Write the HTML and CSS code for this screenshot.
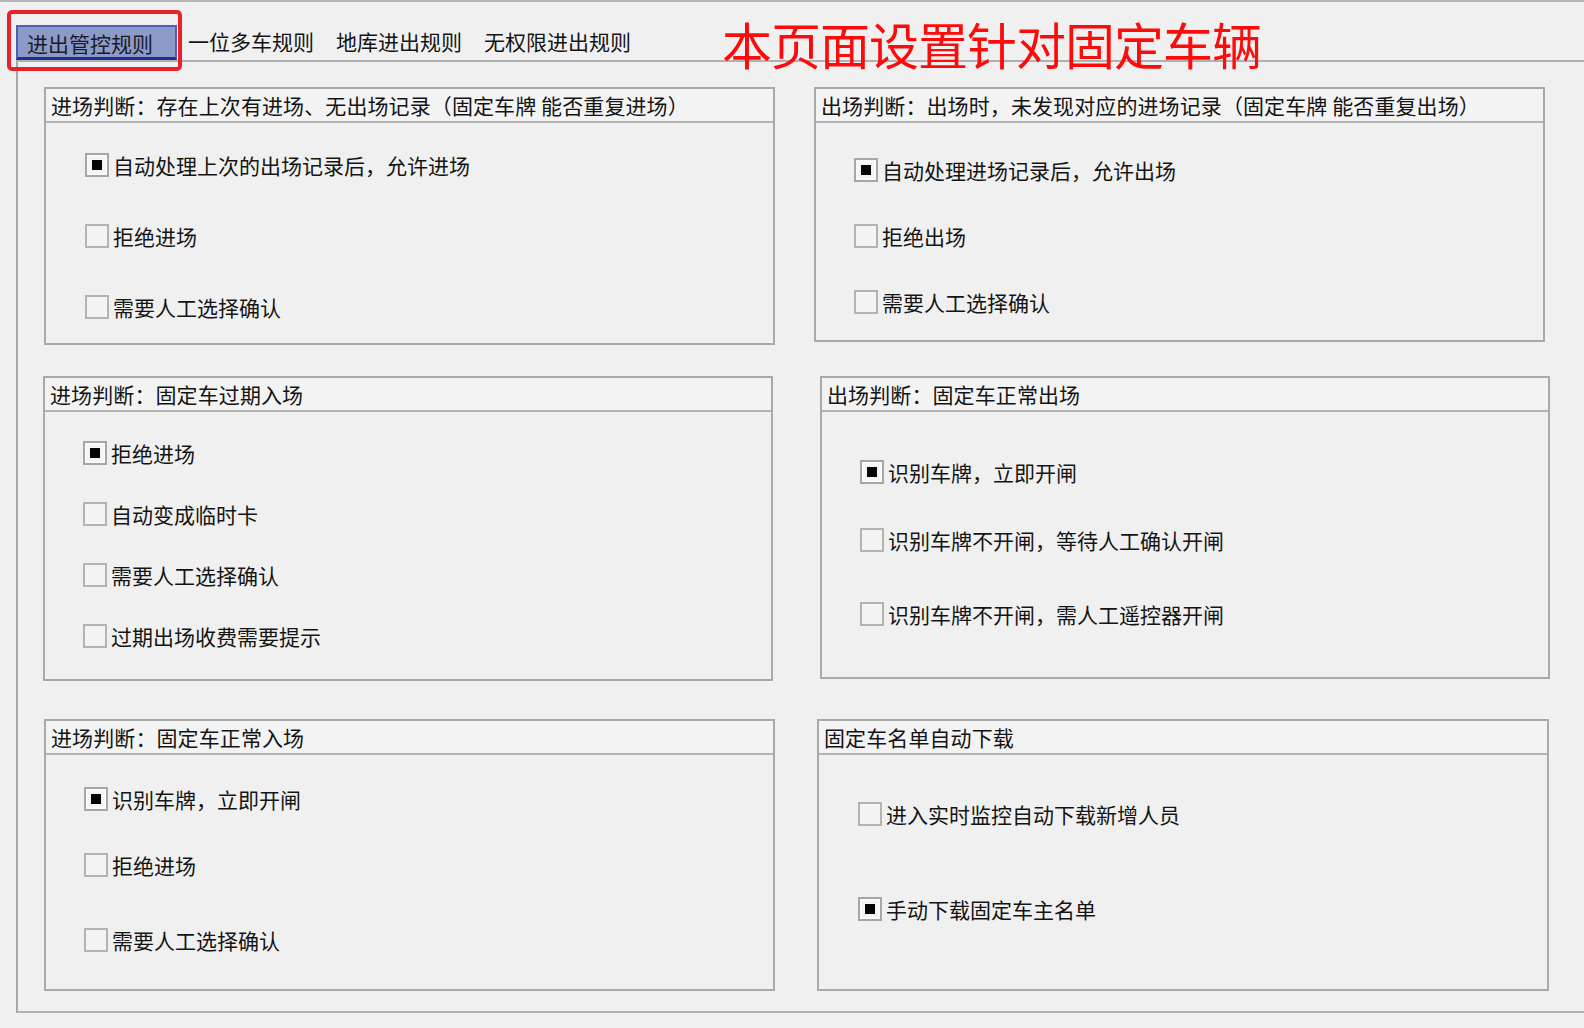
FILE: index.html
```html
<!DOCTYPE html>
<html lang="zh-CN">
<head>
<meta charset="utf-8">
<title>进出管控规则</title>
<link rel="stylesheet" href="styles.css">
</head>
<body>
<div class="window">
  <div class="tabbar">
    <div class="tab active">进出管控规则</div>
    <div class="tab">一位多车规则</div>
    <div class="tab">地库进出规则</div>
    <div class="tab">无权限进出规则</div>
    <div class="mark-box"></div>
    <div class="note">本页面设置针对固定车辆</div>
  </div>
  <div class="panel">
    <div class="grid">
      <section class="group b1">
        <div class="head">进场判断：存在上次有进场、无出场记录（固定车牌 能否重复进场）</div>
        <div class="items">
          <div class="item"><span class="cb checked"></span><span>自动处理上次的出场记录后，允许进场</span></div>
          <div class="item"><span class="cb"></span><span>拒绝进场</span></div>
          <div class="item"><span class="cb"></span><span>需要人工选择确认</span></div>
        </div>
      </section>
      <section class="group b2">
        <div class="head">出场判断：出场时，未发现对应的进场记录（固定车牌 能否重复出场）</div>
        <div class="items">
          <div class="item"><span class="cb checked"></span><span>自动处理进场记录后，允许出场</span></div>
          <div class="item"><span class="cb"></span><span>拒绝出场</span></div>
          <div class="item"><span class="cb"></span><span>需要人工选择确认</span></div>
        </div>
      </section>
      <section class="group b3">
        <div class="head">进场判断：固定车过期入场</div>
        <div class="items">
          <div class="item"><span class="cb checked"></span><span>拒绝进场</span></div>
          <div class="item"><span class="cb"></span><span>自动变成临时卡</span></div>
          <div class="item"><span class="cb"></span><span>需要人工选择确认</span></div>
          <div class="item"><span class="cb"></span><span>过期出场收费需要提示</span></div>
        </div>
      </section>
      <section class="group b4">
        <div class="head">出场判断：固定车正常出场</div>
        <div class="items">
          <div class="item"><span class="cb checked"></span><span>识别车牌，立即开闸</span></div>
          <div class="item"><span class="cb"></span><span>识别车牌不开闸，等待人工确认开闸</span></div>
          <div class="item"><span class="cb"></span><span>识别车牌不开闸，需人工遥控器开闸</span></div>
        </div>
      </section>
      <section class="group b5">
        <div class="head">进场判断：固定车正常入场</div>
        <div class="items">
          <div class="item"><span class="cb checked"></span><span>识别车牌，立即开闸</span></div>
          <div class="item"><span class="cb"></span><span>拒绝进场</span></div>
          <div class="item"><span class="cb"></span><span>需要人工选择确认</span></div>
        </div>
      </section>
      <section class="group b6">
        <div class="head">固定车名单自动下载</div>
        <div class="items">
          <div class="item"><span class="cb"></span><span>进入实时监控自动下载新增人员</span></div>
          <div class="item"><span class="cb checked"></span><span>手动下载固定车主名单</span></div>
        </div>
      </section>
    </div>
  </div>
</div>
</body>
</html>
```

FILE: styles.css
```css
* { box-sizing: border-box; }
html, body { margin: 0; padding: 0; }
body {
  background: #f0f0f0;
  width: 1584px;
  height: 1028px;
  overflow: hidden;
  font-family: "Noto Sans CJK SC", "Noto Sans", sans-serif;
  font-size: 21px;
  color: #141414;
}
.window {
  border-top: 2px solid #b4b4b4;
}
.tabbar {
  position: relative;
  height: 58px;
  padding-left: 16px;
  padding-top: 23px;
  display: flex;
  align-items: flex-end;
}
.tab {
  height: 35px;
  line-height: 33px;
  padding: 0 11px;
  white-space: nowrap;
}
.tab.active {
  width: 161px;
  padding-left: 9px;
  background: #8b9ac6;
  border: 2px solid #5060b0;
  border-bottom: 3px solid #1e2e96;
  color: #1a1a2a;
}
.mark-box {
  position: absolute;
  left: 7px;
  top: 8px;
  width: 175px;
  height: 61px;
  border: 4px solid #ea2228;
  border-radius: 5px;
}
.note {
  position: absolute;
  left: 722px;
  top: 7px;
  font-size: 50px;
  line-height: 68px;
  letter-spacing: -1px;
  color: #ff0a0a;
  white-space: nowrap;
  z-index: 2;
}
.panel {
  margin-left: 16px;
  height: 953px;
  border-left: 2px solid #a8a8a8;
  border-top: 2px solid #b0b0b0;
  border-bottom: 2px solid #b0b0b0;
  padding: 25px 0 0 26px;
}
.grid {
  display: grid;
  grid-template-columns: 731px 731px;
  column-gap: 39px;
  align-items: start;
}
.group {
  border: 2px solid #a9a9a9;
  background: #f0f0f0;
}
.head {
  height: 34px;
  line-height: 32px;
  padding-left: 5px;
  border-bottom: 2px solid #b2b2b2;
  background: #f3f3f3;
  white-space: nowrap;
  font-size: 21px;
  letter-spacing: 0.1px;
}
.items {
  display: flex;
  flex-direction: column;
  padding-left: 39px;
}
.item {
  display: flex;
  align-items: center;
  height: 24px;
  line-height: 24px;
  gap: 4px;
  white-space: nowrap;
}
.cb {
  width: 24px;
  height: 24px;
  flex: none;
  border: 2px solid #b3b3b3;
  background: #f4f4f4;
  display: flex;
  align-items: center;
  justify-content: center;
}
.cb.checked {
  border-color: #a6a6a6;
  box-shadow: inset 0 0 0 2px #fafafa;
}
.cb.checked::after {
  content: "";
  width: 10px;
  height: 10px;
  background: #050505;
}

.b1 { height: 258px; }
.b1 .items { padding-top: 30px; gap: 47px; }

.b2 { height: 255px; }
.b2 .items { padding-top: 35px; gap: 42px; padding-left: 38px; }

.b3 { height: 305px; width: 730px; margin-top: 31px; margin-left: -1px; }
.b3 .items { padding-top: 29px; gap: 37px; padding-left: 38px; }

.b4 { height: 303px; width: 730px; margin-top: 31px; margin-left: 6px; }
.b4 .items { padding-top: 48px; gap: 44px; padding-left: 38px; }
.b4 .item:nth-child(3) { margin-top: 6px; }

.b5 { height: 272px; margin-top: 38px; }
.b5 .items { padding-top: 32px; gap: 42px; padding-left: 38px; }
.b5 .item:nth-child(3) { margin-top: 9px; }

.b6 { height: 272px; width: 732px; margin-top: 38px; margin-left: 3px; }
.b6 .items { padding-top: 47px; gap: 71px; padding-left: 39px; }
```
